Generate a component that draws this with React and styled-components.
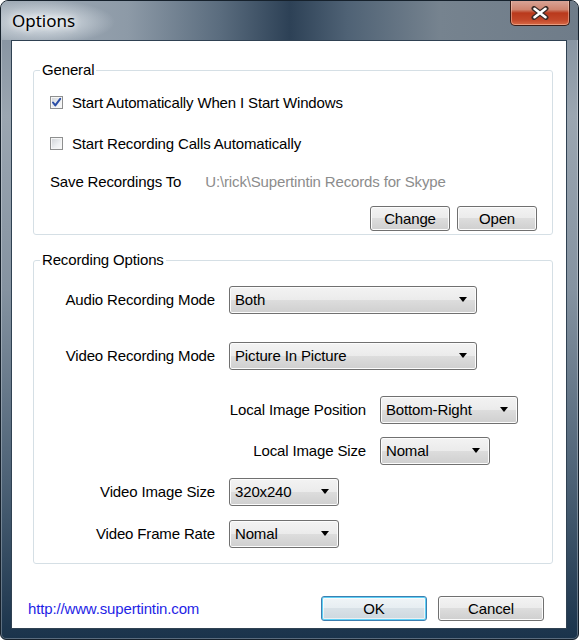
import React from "react";
import styled, { createGlobalStyle } from "styled-components";

const GlobalStyle = createGlobalStyle`
  html, body { margin: 0; padding: 0; background: #ffffff; }
  * { box-sizing: border-box; }
  body { font-family: "Liberation Sans", Arial, sans-serif; }
`;

const Window = styled.div`
  width: 579px;
  height: 640px;
  display: flex;
  flex-direction: column;
  padding: 0 11px 10px 10px;
  border: 1px solid #16212c;
  border-radius: 8px 8px 6px 6px;
  background: linear-gradient(
    180deg,
    #7f8d9b 0%,
    #9ba6b1 18%,
    #8593a1 45%,
    #4d6276 75%,
    #1a334b 100%
  );
  box-shadow: inset 0 0 0 1px rgba(255, 255, 255, 0.28);
  overflow: hidden;
`;

const TitleBar = styled.div`
  height: 39px;
  margin: 0 -11px 0 -10px;
  padding: 0 8px 0 11px;
  display: flex;
  justify-content: space-between;
  align-items: flex-start;
  background:
    radial-gradient(ellipse 70px 22px at 44px 21px, rgba(230, 236, 241, 0.95), rgba(230, 236, 241, 0) 100%),
    linear-gradient(
      90deg,
      #a3aeb9 0%,
      #8d9aa7 22%,
      #5a6c7e 38%,
      #2d4156 50%,
      #4f6275 60%,
      #76838f 76%,
      #6f7c89 100%
    );
`;

const Title = styled.span`
  margin-top: 8px;
  font-family: "Noto Sans", "Open Sans", sans-serif;
  font-size: 17px;
  line-height: 24px;
  color: #000;
  text-shadow: 0 0 6px rgba(255, 255, 255, 0.9), 0 0 10px rgba(255, 255, 255, 0.8);
`;

const CloseButton = styled.div`
  width: 60px;
  height: 26px;
  margin-top: -1px;
  display: flex;
  align-items: center;
  justify-content: center;
  border: 1px solid #3b1d17;
  border-top: none;
  border-radius: 0 0 5px 5px;
  background: linear-gradient(
    180deg,
    #d9a79b 0%,
    #cf8570 38%,
    #b9391c 52%,
    #c3482a 80%,
    #d96a46 100%
  );
  box-shadow: inset 0 0 0 1px rgba(255, 220, 200, 0.45);
`;

const Client = styled.div`
  flex: 1;
  display: flex;
  flex-direction: column;
  padding-top: 20px;
  background: #ffffff;
  border: 1px solid #2f4152;
`;

const GroupBox = styled.fieldset`
  margin: ${(p) => p.$top || 0}px 13px 0 21px;
  padding: 0;
  min-width: 0;
  border: 1px solid #d5dfe5;
  border-radius: 3px;
`;

const Legend = styled.legend`
  margin-left: 6px;
  padding: 0 2px;
  font-size: 15px;
  line-height: 18px;
  letter-spacing: -0.15px;
  color: #000;
`;

const GroupBody = styled.div`
  display: flex;
  flex-direction: column;
  padding: ${(p) => p.$pad};
`;

const CheckRow = styled.label`
  display: flex;
  align-items: center;
  height: 20px;
  margin-top: ${(p) => p.$top || 0}px;
  gap: 9px;
`;

const CheckBox = styled.span`
  width: 13px;
  height: 13px;
  display: flex;
  align-items: center;
  justify-content: center;
  border: 1px solid #8e8f8f;
  background: linear-gradient(135deg, #cfd2d6 0%, #eef0f2 60%, #fbfbfb 100%);
  box-shadow: inset 0 0 0 1px #f6f6f6;
`;

const Text = styled.span`
  font-size: 15px;
  letter-spacing: -0.15px;
  color: ${(p) => p.$color || "#000"};
  white-space: nowrap;
`;

const InfoRow = styled.div`
  display: flex;
  align-items: center;
  height: 20px;
  margin-top: ${(p) => p.$top || 0}px;
  gap: 24px;
`;

const ButtonRow = styled.div`
  display: flex;
  justify-content: flex-end;
  gap: ${(p) => p.$gap || 7}px;
  margin-top: ${(p) => p.$top || 0}px;
`;

const PushButton = styled.button`
  width: ${(p) => p.$width}px;
  height: 25px;
  padding: 0;
  font-family: "Liberation Sans", Arial, sans-serif;
  font-size: 15px;
  letter-spacing: -0.15px;
  color: #000;
  border: 1px solid ${(p) => (p.$default ? "#3c7fb1" : "#707070")};
  border-radius: 3px;
  background: ${(p) =>
    p.$default
      ? "linear-gradient(180deg, #f0f5f8 0%, #e6edf1 50%, #d8e1e7 50%, #cdd7de 100%)"
      : "linear-gradient(180deg, #f3f3f3 0%, #ebebeb 50%, #dddddd 50%, #cfcfcf 100%)"};
  box-shadow: ${(p) =>
    p.$default
      ? "inset 0 0 0 1px #5fd0f5, inset 0 0 0 2px rgba(255,255,255,0.6)"
      : "inset 0 0 0 1px #fcfcfc"};
`;

const FieldRow = styled.div`
  display: flex;
  align-items: center;
  height: 27px;
  margin-top: ${(p) => p.$top || 0}px;
  gap: 14px;
`;

const FieldLabel = styled.span`
  width: ${(p) => p.$width}px;
  text-align: right;
  font-size: 15px;
  letter-spacing: -0.15px;
  color: #000;
  white-space: nowrap;
`;

const Combo = styled.div`
  width: ${(p) => p.$width}px;
  height: 28px;
  display: flex;
  align-items: center;
  justify-content: space-between;
  padding: 0 9px 0 5px;
  border: 1px solid #707070;
  border-radius: 3px;
  background: linear-gradient(180deg, #f3f3f3 0%, #ebebeb 50%, #dddddd 50%, #cfcfcf 100%);
  box-shadow: inset 0 0 0 1px #fcfcfc;
`;

const ComboText = styled.span`
  font-size: 15px;
  font-weight: 400;
  letter-spacing: -0.15px;
  color: #000;
  white-space: nowrap;
`;

const ComboArrow = styled.span`
  width: 0;
  height: 0;
  border-left: 4.5px solid transparent;
  border-right: 4.5px solid transparent;
  border-top: 5px solid #000;
`;

const Footer = styled.div`
  display: flex;
  align-items: center;
  justify-content: space-between;
  margin-top: 32px;
  padding: 0 22px 0 16px;
`;

const Link = styled.a`
  font-size: 15px;
  letter-spacing: -0.15px;
  color: #1f1fe6;
  text-decoration: none;
`;

const Check = () => (
  <svg width="11" height="11" viewBox="0 0 11 11">
    <path d="M2 5.5 L4.3 8.4 L9.2 1.8" fill="none" stroke="#2b4ea6" strokeWidth="2" strokeLinecap="round" strokeLinejoin="round" />
  </svg>
);

const CloseGlyph = () => (
  <svg width="18" height="14" viewBox="0 0 18 14">
    <path d="M3 2.5 L15 11.5 M15 2.5 L3 11.5" stroke="#3a2a27" strokeWidth="5" strokeLinecap="round" />
    <path d="M3.5 2.8 L14.5 11.2 M14.5 2.8 L3.5 11.2" stroke="#ffffff" strokeWidth="2.6" strokeLinecap="round" />
  </svg>
);

const fields = [
  { label: "Audio Recording Mode", value: "Both", lw: 181, cw: 248, top: 0 },
  { label: "Video Recording Mode", value: "Picture In Picture", lw: 181, cw: 248, top: 29 },
  { label: "Local Image Position", value: "Bottom-Right", lw: 332, cw: 138, top: 27 },
  { label: "Local Image Size", value: "Nomal", lw: 332, cw: 110, top: 14 },
  { label: "Video Image Size", value: "320x240", lw: 181, cw: 110, top: 14 },
  { label: "Video Frame Rate", value: "Nomal", lw: 181, cw: 110, top: 15 },
];

export default function App() {
  return (
    <>
      <GlobalStyle />
      <Window>
        <TitleBar>
          <Title>Options</Title>
          <CloseButton>
            <CloseGlyph />
          </CloseButton>
        </TitleBar>
        <Client>
          <GroupBox>
            <Legend>General</Legend>
            <GroupBody $pad="13px 15px 3px 16px">
              <CheckRow>
                <CheckBox>
                  <Check />
                </CheckBox>
                <Text>Start Automatically When I Start Windows</Text>
              </CheckRow>
              <CheckRow $top={21}>
                <CheckBox />
                <Text>Start Recording Calls Automatically</Text>
              </CheckRow>
              <InfoRow $top={18}>
                <Text>Save Recordings To</Text>
                <Text $color="#8c8c8c">U:\rick\Supertintin Records for Skype</Text>
              </InfoRow>
              <ButtonRow $top={15}>
                <PushButton $width={80}>Change</PushButton>
                <PushButton $width={80}>Open</PushButton>
              </ButtonRow>
            </GroupBody>
          </GroupBox>
          <GroupBox $top={16}>
            <Legend>Recording Options</Legend>
            <GroupBody $pad="17px 0 16px 0">
              {fields.map((f) => (
                <FieldRow key={f.label} $top={f.top}>
                  <FieldLabel $width={f.lw}>{f.label}</FieldLabel>
                  <Combo $width={f.cw}>
                    <ComboText>{f.value}</ComboText>
                    <ComboArrow />
                  </Combo>
                </FieldRow>
              ))}
            </GroupBody>
          </GroupBox>
          <Footer>
            <Link href="#">http://www.supertintin.com</Link>
            <ButtonRow $gap={11}>
              <PushButton $width={106} $default>OK</PushButton>
              <PushButton $width={106}>Cancel</PushButton>
            </ButtonRow>
          </Footer>
        </Client>
      </Window>
    </>
  );
}
